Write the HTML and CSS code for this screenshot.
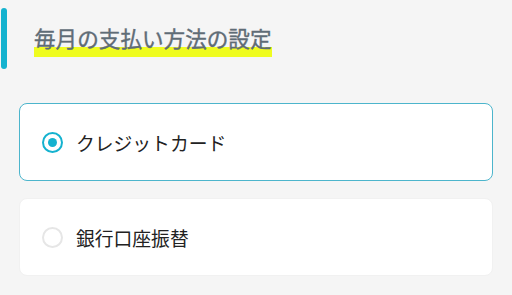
FILE: index.html
```html
<!DOCTYPE html>
<html lang="ja">
<head>
    <meta charset="UTF-8">
    <meta name="viewport" content="width=device-width, initial-scale=1.0">
    <title>毎月の支払い方法の設定</title>
    <link rel="stylesheet" href="styles.css">
</head>
<body>
    <div class="payment-section">
        <div class="section-header">
            <div class="accent-bar"></div>
            <h2 class="section-title"><span class="marker">毎月の支払い方法の設定</span></h2>
        </div>

        <div class="option-list">
            <label class="option-card selected">
                <span class="radio"></span>
                <span class="option-label">クレジットカード</span>
            </label>
            <label class="option-card">
                <span class="radio"></span>
                <span class="option-label">銀行口座振替</span>
            </label>
        </div>
    </div>
</body>
</html>
```

FILE: styles.css
```css
:root {
    --teal: #14b2cf;
    --teal-border: #4cb5cc;
    --bg: #f5f5f5;
    --white: #ffffff;
    --title: #5f6c76;
    --text: #222222;
    --marker: #effc1f;
    --radio-off: #e6e6e6;
}

body {
    margin: 0;
    background-color: var(--bg);
    font-family: "Noto Sans CJK JP", "Noto Sans", sans-serif;
    color: var(--text);
}

.payment-section {
    width: 512px;
    height: 295px;
    box-sizing: border-box;
    padding-top: 8px;
}

.section-header {
    display: flex;
    align-items: flex-start;
}

.accent-bar {
    width: 6px;
    height: 61px;
    margin-left: 1px;
    border-radius: 3px;
    background-color: var(--teal);
}

.section-title {
    margin: 19px 0 0 27px;
    font-size: 21.6px;
    font-weight: 400;
    line-height: 22px;
    color: var(--title);
    -webkit-text-stroke: 0.4px var(--title);
}

.section-title .marker {
    display: inline-block;
    padding-bottom: 8px;
    background: linear-gradient(transparent 20px, var(--marker) 20px);
}

.option-list {
    display: flex;
    flex-direction: column;
    gap: 17px;
    margin-top: 34px;
    padding: 0 19px;
}

.option-card {
    display: flex;
    align-items: center;
    height: 78px;
    box-sizing: border-box;
    padding-left: 22px;
    background-color: var(--white);
    border: 1px solid #f1f1f1;
    border-radius: 8px;
}

.option-card.selected {
    border-color: var(--teal-border);
}

.radio {
    width: 21px;
    height: 21px;
    box-sizing: border-box;
    border: 2px solid var(--radio-off);
    border-radius: 50%;
    display: flex;
    align-items: center;
    justify-content: center;
}

.selected .radio {
    border-color: var(--teal);
}

.selected .radio::after {
    content: "";
    width: 9px;
    height: 9px;
    border-radius: 50%;
    background-color: var(--teal);
}

.option-label {
    margin-left: 13px;
    font-size: 18.8px;
    color: var(--text);
}
```
